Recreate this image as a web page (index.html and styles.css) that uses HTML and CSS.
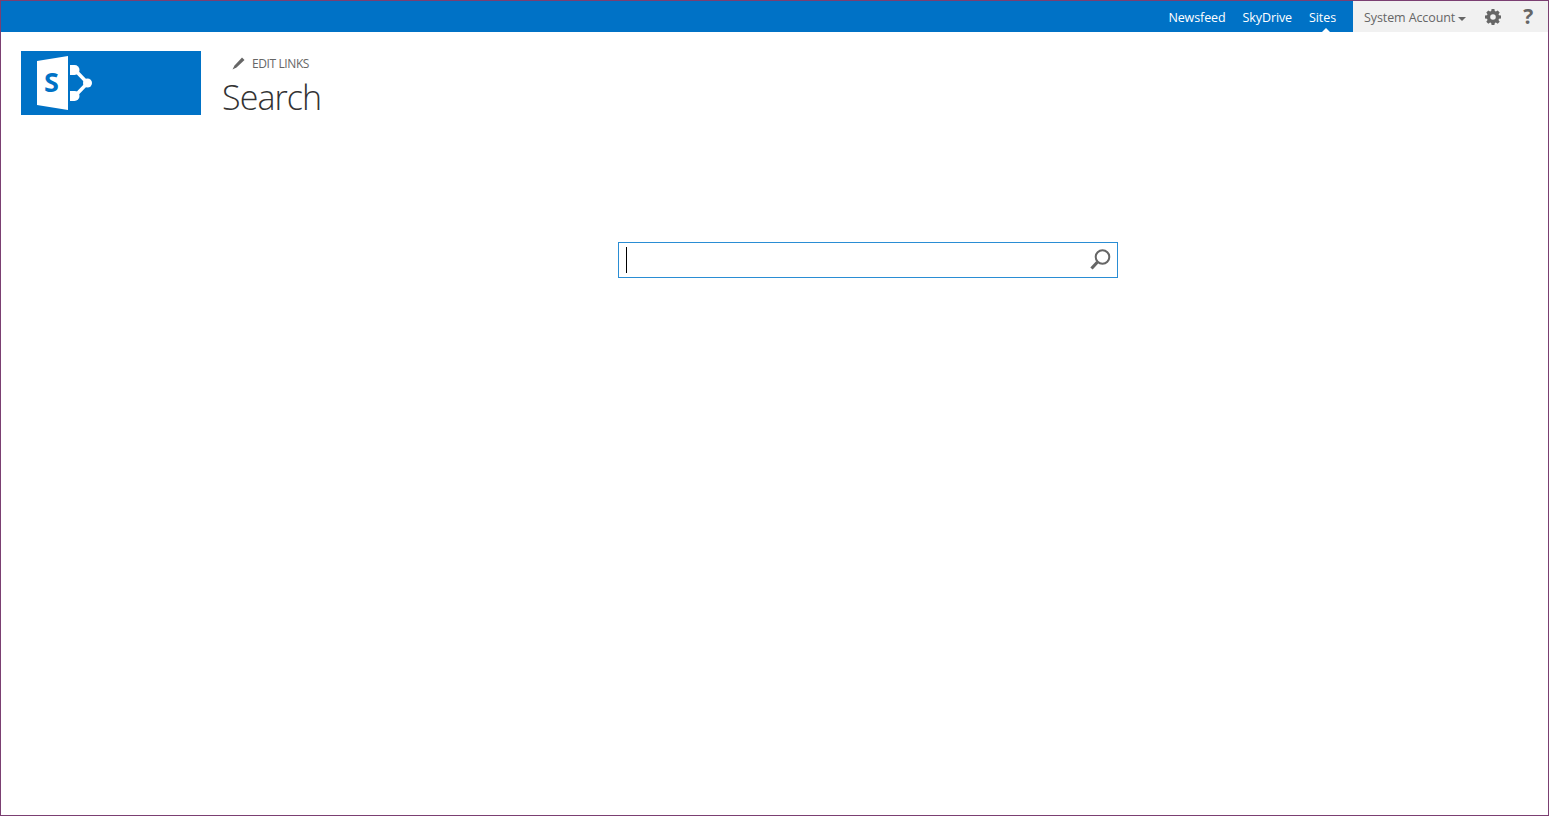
FILE: index.html
```html
<!DOCTYPE html>
<html lang="en">
<head>
    <meta charset="UTF-8">
    <meta name="viewport" content="width=device-width, initial-scale=1.0">
    <title>Search</title>
    <link rel="stylesheet" href="styles.css">
</head>
<body>
    <div class="window">
        <!-- Suite bar -->
        <div class="suite-bar">
            <nav class="suite-links">
                <a href="#" class="suite-link">Newsfeed</a>
                <a href="#" class="suite-link">SkyDrive</a>
                <a href="#" class="suite-link suite-link-active">Sites</a>
            </nav>
            <div class="user-panel">
                <a href="#" class="user-name">System Account<span class="caret-down"></span></a>
                <svg class="gear-icon" width="16" height="16" viewBox="0 0 16 16">
                    <path fill="#666" fill-rule="evenodd" d="M6.600 0h2.800l.4 2.100 1.100.5L12.700 1.400l2 2-1.200 1.800.5 1.100 2 .3v2.800l-2 .4-.5 1.100 1.200 1.800-2 2-1.800-1.200-1.100.5-.4 2H6.600l-.4-2-1.100-.5-1.800 1.200-2-2 1.200-1.800-.5-1.100-2-.4V6.600l2-.3.5-1.100-1.200-1.800 2-2 1.800 1.200 1.100-.5zM8 5.200a2.800 2.800 0 1 0 0 5.600 2.800 2.800 0 0 0 0-5.600z"/>
                </svg>
                <span class="help-icon">?</span>
            </div>
        </div>

        <!-- Site header -->
        <header class="site-header">
            <div class="site-logo">
                <svg width="56" height="56" viewBox="0 0 56 56">
                    <path fill="#fff" d="M0 6 31 1V55L0 50z"/>
                    <g fill="#fff">
                        <path d="M33 10h4.500a5 5 0 0 1 0 10H33z"/>
                        <path d="M33 36h4.500a5 5 0 0 1 0 10H33z"/>
                        <circle cx="50.500" cy="28" r="4.500"/>
                    </g>
                    <path d="M38 15 50.500 28 38 41" fill="none" stroke="#fff" stroke-width="3.500"/>
                    <text class="logo-letter" x="7" y="37">S</text>
                </svg>
            </div>
            <div class="site-title">
                <a href="#" class="edit-links">
                    <svg width="13" height="13" viewBox="0 0 13 13">
                        <path fill="#666" d="M10 .5 12.500 3 4.500 10.500 .5 12.500 2.500 8.500z"/>
                    </svg>
                    EDIT LINKS
                </a>
                <h1>Search</h1>
            </div>
        </header>

        <!-- Search box -->
        <div class="search-area">
            <div class="search-box">
                <span class="text-cursor"></span>
                <svg width="22" height="22" viewBox="0 0 22 22">
                    <circle cx="13.500" cy="8" r="6.800" fill="none" stroke="#666" stroke-width="2"/>
                    <path d="M8.500 13 2.500 19.500" stroke="#666" stroke-width="3.200" fill="none"/>
                </svg>
            </div>
        </div>
    </div>
</body>
</html>
```
FILE: styles.css
```css
html, body {
    margin: 0;
    padding: 0;
    background: #fff;
    overflow: hidden;
}

.window {
    box-sizing: border-box;
    width: 1549px;
    height: 816px;
    border: 1px solid #7b3f72;
    font-family: "Open Sans", "Noto Sans", Arial, sans-serif;
}

.suite-bar {
    display: flex;
    justify-content: flex-end;
    height: 31px;
    background: #0072c6;
}

.suite-links {
    display: flex;
    align-items: center;
    gap: 17px;
    padding: 2px 17px 0 0;
}

.suite-link {
    position: relative;
    color: #fff;
    font-size: 12.500px;
    letter-spacing: -0.1px;
    text-decoration: none;
}

/* little white notch under the active link */
.suite-link-active:after {
    content: '';
    position: absolute;
    left: 17px;
    bottom: -6px;
    margin-left: -4px;
    border: 4px solid transparent;
    border-top: 0;
    border-bottom-color: #fff;
}

.user-panel {
    display: flex;
    align-items: center;
    width: 195px;
    box-sizing: border-box;
    padding: 2px 0 0 11px;
    background: #f1f1f1;
}

.user-name {
    color: #666;
    font-size: 12.500px;
    letter-spacing: -0.1px;
    text-decoration: none;
}

.caret-down {
    display: inline-block;
    margin-left: 3px;
    vertical-align: middle;
    border: 4px solid transparent;
    border-bottom: 0;
    border-top-color: #666;
}

.gear-icon {
    margin: -2px 0 0 19px;
}

.help-icon {
    margin: -2px 0 0 22px;
    color: #666;
    font-size: 21px;
    font-weight: 700;
    line-height: 1;
}

.site-header {
    display: flex;
    padding: 19px 0 0 20px;
}

.site-logo {
    display: flex;
    align-items: center;
    width: 180px;
    height: 64px;
    box-sizing: border-box;
    padding-left: 16px;
    background: #0072c6;
}

.logo-letter {
    fill: #0072c6;
    font-family: "Open Sans", Arial, sans-serif;
    font-size: 27px;
    font-weight: 700;
}

.site-title {
    padding-left: 21px;
}

.edit-links {
    display: flex;
    align-items: center;
    gap: 7px;
    height: 24px;
    padding-left: 10px;
    color: #666;
    font-size: 12px;
    letter-spacing: -0.4px;
    text-decoration: none;
}

.site-title h1 {
    margin: 0;
    color: #333;
    font-size: 34px;
    font-weight: 300;
    letter-spacing: -0.9px;
    line-height: 45px;
}

.search-area {
    padding: 122px 0 0 617px;
}

.search-box {
    box-sizing: border-box;
    display: flex;
    align-items: center;
    justify-content: space-between;
    width: 500px;
    height: 36px;
    padding: 0 6px 0 7px;
    border: 1px solid #2a8dd4;
}

.text-cursor {
    width: 1px;
    height: 26px;
    background: #000;
}
```
